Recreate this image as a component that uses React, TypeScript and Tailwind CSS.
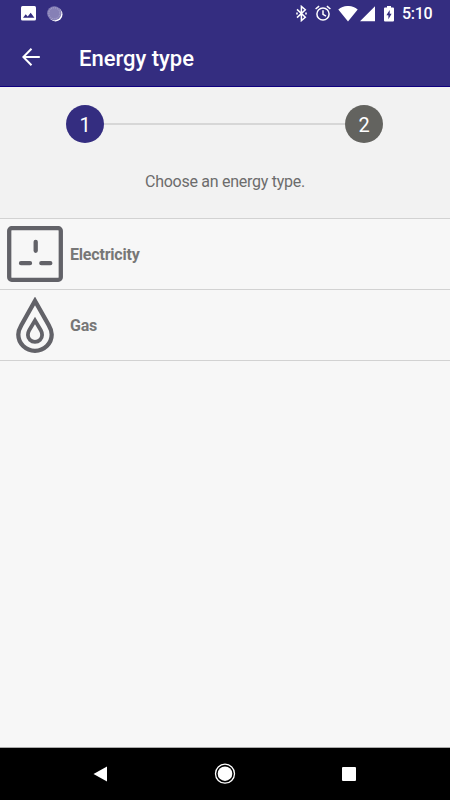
import type { ReactNode } from "react";

interface EnergyRowProps {
  label: string;
  icon: ReactNode;
}

const StatusBar = () => (
  <div className="flex h-[27px] items-center pl-[21px] pr-[17px] text-white">
    <svg className="h-[15px] w-[15px]" viewBox="0 0 15 15">
      <rect width="15" height="14.5" rx="1.5" fill="#fff" />
      <path d="M2 11.8 4.7 8.3l2 2.3 3-3.9 3.7 5.1z" fill="#342d80" />
    </svg>
    <svg className="ml-[11px] h-4 w-4" viewBox="0 0 16 16">
      <circle cx="8.5" cy="8.4" r="7" fill="#fff" />
      <circle cx="7.3" cy="7.3" r="7.1" fill="#8680b6" />
      <circle cx="7.3" cy="7.3" r="5.5" fill="none" stroke="#b5b1d3" strokeWidth=".8" strokeDasharray="1 1" />
    </svg>
    <div className="ml-auto flex items-center">
      <svg className="h-[17px] w-[11px]" viewBox="0 0 11 17" fill="none" stroke="#fff" strokeWidth="1.5">
        <path d="m1 4.4 8.3 7.8-3.9 3.4V1.4l3.9 3.4L1 12.6" />
        <path d="M.2 8.5h1.6M9.2 8.5h1.6" strokeWidth="1.8" />
      </svg>
      <svg className="ml-2 h-[17px] w-[17px]" viewBox="0 0 17 17" fill="none" stroke="#fff" strokeWidth="1.5">
        <circle cx="8" cy="9" r="6.1" />
        <path d="M8 5.3v4l3 1.8M.6 4l3.5-2.9M15.4 4l-3.5-2.9" />
      </svg>
      <svg className="ml-1.5 h-4 w-5" viewBox="0 0 20 16" fill="#fff">
        <path d="M.3 3.5C6-1.200 14-1.200 19.700 3.500L10 15.500z" />
      </svg>
      <svg className="ml-0.5 h-4 w-4" viewBox="0 0 16 16" fill="#fff">
        <path d="M15 .2v15H0z" />
      </svg>
      <svg className="ml-2 h-4 w-[10px]" viewBox="0 0 10 16">
        <path d="M3 0h4v1.6h2q1 0 1 1V14.5q0 1-1 1H1q-1 0-1-1V2.6q0-1 1-1h2z" fill="#fff" />
        <path d="M5.7 3.9 2.4 9.3h2v4L7.6 7.7H5.7z" fill="#342d80" />
      </svg>
      <span className="ml-2 w-[31px] whitespace-nowrap pt-px text-[16px] leading-[26px] font-medium tracking-[-0.3px]">5:10</span>
    </div>
  </div>
);

const Header = () => (
  <header className="h-[87px] border-b border-[#100080] bg-[#342d80]">
    <StatusBar />
    <div className="flex h-[60px] items-center pl-[22px] text-white">
      <svg className="h-[18px] w-[18px]" viewBox="0 0 18 18" fill="none" stroke="#fff" strokeWidth="2">
        <path d="M17.8 9H1.5M9.5.8 1.3 9l8.2 8.2" />
      </svg>
      <h1 className="ml-[39px] pt-0.5 text-[22px] font-medium">Energy type</h1>
    </div>
  </header>
);

const Stepper = () => (
  <div className="flex items-center pl-[66px] pr-[67px] pt-[18px] text-[20px] text-white">
    <div className="flex h-[38px] w-[38px] items-center justify-center rounded-full bg-[#342d80] pt-0.5">1</div>
    <div className="h-[2px] flex-1 bg-[#d7d7d7]" />
    <div className="flex h-[38px] w-[38px] items-center justify-center rounded-full bg-[#63635f] pt-0.5">2</div>
  </div>
);

const SocketIcon = () => (
  <svg className="h-14 w-14" viewBox="0 0 56 56" fill="none" stroke="#626268" strokeWidth="4.3">
    <rect x="2.2" y="2.2" width="51.6" height="51.6" rx="2.5" />
    <path d="M28.7 15.8v9M14 37.2h9M34.3 37.2h9" strokeLinecap="round" />
  </svg>
);

const FlameIcon = () => (
  <svg className="h-14 w-14" viewBox="0 0 56 56" fill="none" stroke="#626268" strokeWidth="4.3">
    <path d="M28 3.9 14.3 28.2Q11.3 33.3 11.3 37.6a16.7 16.2 0 0 0 33.4 0Q44.7 33.3 41.7 28.2Z" />
    <path d="M28 23.5 22.2 33.3Q20.9 35.6 20.9 38a7.1 6.9 0 0 0 14.2 0Q35.1 35.6 33.8 33.3Z" strokeWidth="3.8" />
  </svg>
);

const EnergyRow = ({ label, icon }: EnergyRowProps) => (
  <button className="flex h-[71px] w-full items-center border-b border-[#d2d2d2] pl-[7px] text-left">
    {icon}
    <span className="ml-[7px] pt-0.5 text-[16px] font-bold tracking-[-0.2px] text-[#777777]">{label}</span>
  </button>
);

const NavigationBar = () => (
  <nav className="flex h-[53px] items-center border-t border-[#aaaaaa] bg-black pl-[93px]">
    <svg className="h-4 w-[14px]" viewBox="0 0 14 16" fill="#fff">
      <path d="M14 .5v15L.5 8z" />
    </svg>
    <svg className="ml-[107px] h-[22px] w-[22px]" viewBox="0 0 22 22">
      <circle cx="11" cy="10.7" r="9.5" fill="none" stroke="#fff" strokeWidth="1.3" />
      <circle cx="11" cy="10.7" r="7.3" fill="#fff" />
    </svg>
    <div className="ml-[106px] h-[14px] w-[14px] rounded-[1px] bg-white" />
  </nav>
);

export default function App() {
  return (
    <div className="flex h-[800px] w-[450px] flex-col overflow-hidden bg-[#f7f7f7] font-['Roboto',sans-serif]">
      <Header />
      <section className="h-[132px] border-b border-[#d2d2d2] bg-[#f2f2f2]">
        <Stepper />
        <p className="mt-[27px] text-center text-[16px] tracking-[-0.27px] text-[#6c6c6c]">Choose an energy type.</p>
      </section>
      <main className="flex-1">
        <EnergyRow label="Electricity" icon={<SocketIcon />} />
        <EnergyRow label="Gas" icon={<FlameIcon />} />
      </main>
      <NavigationBar />
    </div>
  );
}
